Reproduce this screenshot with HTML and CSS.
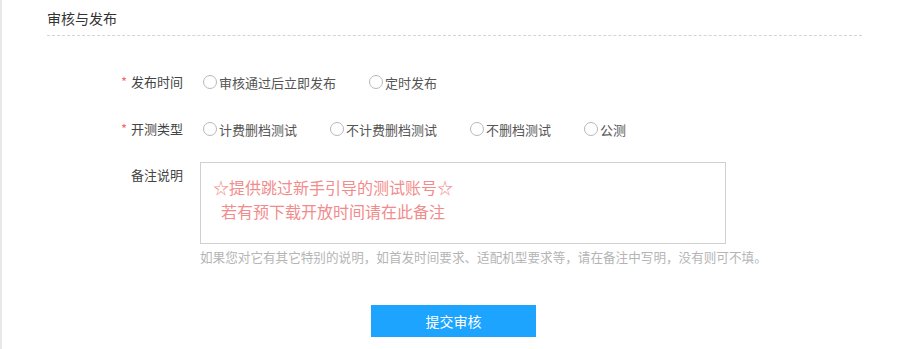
FILE: index.html
```html
<!DOCTYPE html>
<html lang="zh-CN">
<head>
  <meta charset="UTF-8">
  <meta name="viewport" content="width=device-width, initial-scale=1.0">
  <title>审核与发布</title>
  <link rel="stylesheet" href="styles.css">
</head>
<body>
  <div class="panel">
    <h3 class="title">审核与发布</h3>
    <div class="form">
      <div class="row">
        <span class="label"><i class="req">*</i>发布时间</span>
        <div class="options">
          <label class="radio"><span class="dot"></span>审核通过后立即发布</label>
          <label class="radio"><span class="dot"></span>定时发布</label>
        </div>
      </div>
      <div class="row">
        <span class="label"><i class="req">*</i>开测类型</span>
        <div class="options">
          <label class="radio"><span class="dot"></span>计费删档测试</label>
          <label class="radio"><span class="dot"></span>不计费删档测试</label>
          <label class="radio"><span class="dot"></span>不删档测试</label>
          <label class="radio"><span class="dot"></span>公测</label>
        </div>
      </div>
      <div class="row row-remark">
        <span class="label">备注说明</span>
        <div class="field">
          <div class="remark">
            <span class="placeholder">☆提供跳过新手引导的测试账号☆<br>若有预下载开放时间请在此备注</span>
          </div>
          <p class="hint">如果您对它有其它特别的说明，如首发时间要求、适配机型要求等，请在备注中写明，没有则可不填。</p>
        </div>
      </div>
      <div class="actions">
        <button class="submit">提交审核</button>
      </div>
    </div>
  </div>
</body>
</html>
```

FILE: styles.css
```css
body {
  margin: 0;
  font-family: "Noto Sans CJK SC", "Noto Sans", sans-serif;
  background: #fff;
  color: #333;
}
.panel {
  height: 349px;
  box-sizing: border-box;
  border-left: 2px solid #e8e8e8;
  padding-left: 45px;
}
.title {
  margin: 0;
  width: 815px;
  padding-top: 8px;
  height: 27px;
  font-size: 14px;
  font-weight: normal;
  line-height: 20px;
  border-bottom: 1px dashed #d4d4d4;
}
.form {
  padding-top: 36px;
}
.row {
  display: flex;
  align-items: center;
  height: 20px;
  margin-bottom: 27px;
}
.label {
  width: 136px;
  text-align: right;
  font-size: 13px;
  line-height: 20px;
  color: #444;
  flex-shrink: 0;
}
.req {
  font-style: normal;
  color: #f26b6b;
  margin-right: 4px;
}
.options {
  display: flex;
  margin-left: 20px;
}
.radio {
  display: flex;
  align-items: center;
  font-size: 13px;
  color: #555;
  margin-right: 33px;
}
.dot {
  width: 12px;
  height: 12px;
  border: 1px solid #b8b8b8;
  border-radius: 50%;
  margin-right: 2px;
}
.row-remark {
  align-items: flex-start;
  height: auto;
  margin-top: -4px;
  margin-bottom: 0;
}
.row-remark .label {
  margin-top: 3px;
}
.field {
  margin-left: 17px;
}
.remark {
  width: 526px;
  height: 82px;
  border: 1px solid #d0d0d0;
  padding: 12px 0 0 12px;
  box-sizing: border-box;
}
.placeholder {
  display: inline-block;
  text-align: center;
  font-size: 16px;
  line-height: 24px;
  color: #f28c8c;
}
.hint {
  margin: 5px 0 0;
  font-size: 12.6px;
  line-height: 16px;
  color: #b5b5b5;
}
.actions {
  padding-left: 324px;
  margin-top: 40px;
}
.submit {
  width: 165px;
  height: 32px;
  border: none;
  background: #1ca4ff;
  color: #fff;
  font-family: inherit;
  font-size: 14px;
  cursor: pointer;
}
```
